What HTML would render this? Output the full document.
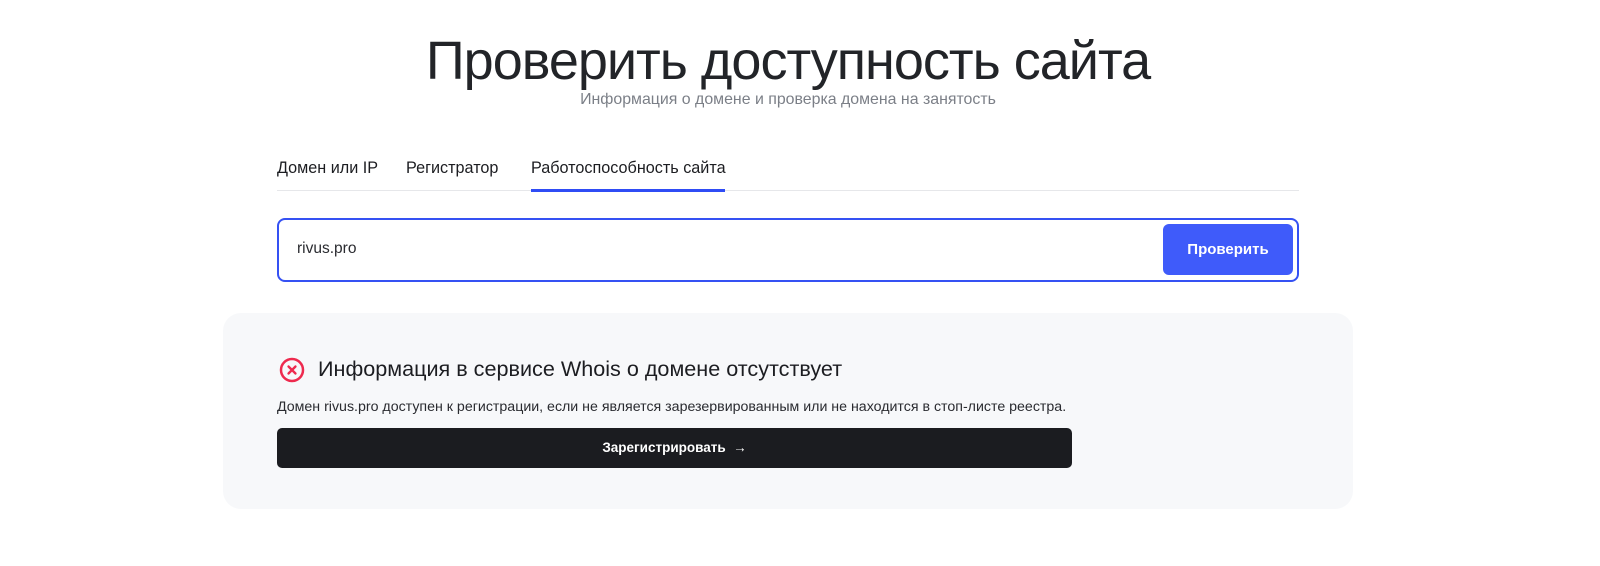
<!DOCTYPE html>
<html><head><meta charset="utf-8"><style>
*{box-sizing:border-box;margin:0;padding:0}
body{width:1600px;height:566px;background:#fff;font-family:"Liberation Sans",Arial,sans-serif;color:#1c1d21;position:relative;overflow:hidden}
.abs{position:absolute}
h1{position:absolute;left:0;width:1576px;top:30px;text-align:center;font-size:54px;font-weight:400;letter-spacing:-1px;color:#222428}
.sub{left:0;width:1576px;top:91px;text-align:center;font-size:15.9px;color:#7b7f87}
.tab{top:159px;font-size:16.2px;color:#1c1d21}
.line{left:277px;top:190px;width:1022px;height:1px;background:#e6e7ea}
.act{left:531px;top:189px;width:194px;height:3px;background:#2f4cf5}
.inp{left:277px;top:218px;width:1022px;height:64px;border:2px solid #3551f3;border-radius:8px}
.btn{left:1163px;top:224px;width:130px;height:51px;background:#3f5bfa;border-radius:6px;color:#fff;font-size:15px;font-weight:700;text-align:center;line-height:51px}
.card{left:223px;top:313px;width:1130px;height:196px;background:#f7f8fa;border-radius:18px}
.reg{left:277px;top:428px;width:795px;height:40px;background:#1b1c20;border-radius:5px;color:#fff;font-size:13.5px;font-weight:700;text-align:center;line-height:40px}
</style></head><body>
<h1>Проверить доступность сайта</h1>
<div class="abs sub">Информация о домене и проверка домена на занятость</div>
<div class="abs tab" style="left:277px">Домен или IP</div>
<div class="abs tab" style="left:406px">Регистратор</div>
<div class="abs tab" style="left:531px">Работоспособность сайта</div>
<div class="abs line"></div><div class="abs act"></div>
<div class="abs inp"></div>
<div class="abs" style="left:297px;top:240px;font-size:15.5px;color:#2a2b30">rivus.pro</div>
<div class="abs btn">Проверить</div>
<div class="abs card"></div>
<svg class="abs" style="left:279px;top:357px" width="26" height="26" viewBox="0 0 26 26"><circle cx="13" cy="13" r="11" fill="none" stroke="#ee2a4e" stroke-width="2.5"/><path d="M9.5 9.5L16.5 16.5M16.5 9.5L9.5 16.5" stroke="#ee2a4e" stroke-width="2.3" stroke-linecap="round"/></svg>
<div class="abs" style="left:318px;top:356px;font-size:21.6px;color:#1c1d21">Информация в сервисе Whois о домене отсутствует</div>
<div class="abs" style="left:277px;top:399px;font-size:14.2px;color:#2a2b30">Домен rivus.pro доступен к регистрации, если не является зарезервированным или не находится в стоп-листе реестра.</div>
<div class="abs reg">Зарегистрировать &nbsp;→</div>
</body></html>
